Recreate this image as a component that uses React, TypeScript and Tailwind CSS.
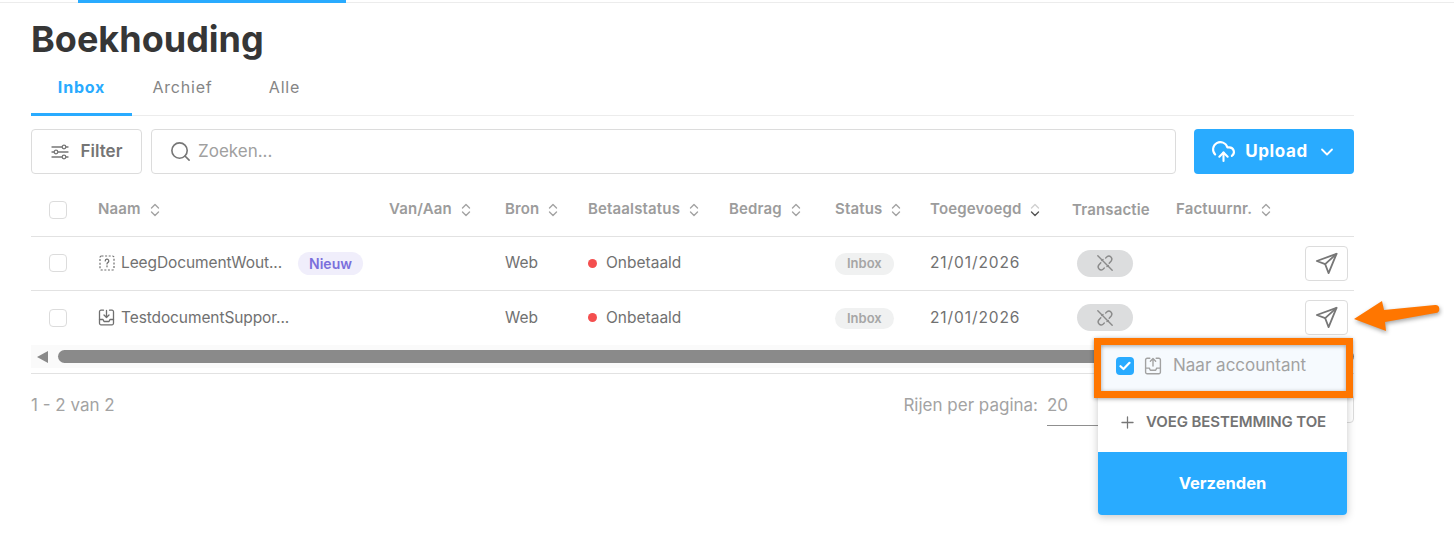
import { ChevronDown, CloudUpload, Plus, Search } from "lucide-react"

const columns = [
  { name: "Van/Aan", width: "w-[116px]" },
  { name: "Bron", width: "w-[83px]" },
  { name: "Betaalstatus", width: "w-[141px]" },
  { name: "Bedrag", width: "w-[106px]" },
  { name: "Status", width: "w-[95px]" },
  { name: "Toegevoegd", width: "w-[142px]" },
]

function SortIcon({ active }: { active?: boolean }) {
  return (
    <svg width="10" height="16" viewBox="0 0 10 16" fill="none" strokeWidth="1.4" strokeLinecap="round" strokeLinejoin="round">
      <path d="M1.5 6 5 2.5 8.5 6" stroke={active ? "#d0d0d0" : "#a3a3a3"} />
      <path d="M1.5 10 5 13.5 8.5 10" stroke={active ? "#555555" : "#a3a3a3"} />
    </svg>
  )
}

function Checkbox() {
  return <span className="block h-[18px] w-[18px] rounded-[4px] border border-[#dcdcdc] bg-white" />
}

function HeaderCell({ name, active }: { name: string; active?: boolean }) {
  return (
    <span className="flex items-center gap-[9px] text-[15px] font-semibold tracking-[0.15px] text-[#9c9c9c]">
      {name}
      <SortIcon active={active} />
    </span>
  )
}

function SendIcon() {
  return (
    <svg width="23" height="23" viewBox="0 0 23 23" fill="none" stroke="#777777" strokeWidth="1.8" strokeLinejoin="round" strokeLinecap="round">
      <path d="M21.5 1.8 1.8 9l8.4 3.2 3.4 8.9z" />
      <path d="M21.5 1.8 10.2 12.2" />
    </svg>
  )
}

function UnlinkIcon() {
  return (
    <svg width="18" height="18" viewBox="0 0 18 18" fill="none" stroke="#8a8a8a" strokeWidth="1.4" strokeLinecap="round">
      <path d="M9.7 4 11 2.8a3 3 0 0 1 4.2 4.2l-2 2.2" />
      <path d="M8.3 14 7 15.2A3 3 0 0 1 2.8 11l2-2.2" />
      <path d="M7 5.5 5.8 6.6" />
      <path d="M12.3 11.4 11 12.6" />
      <path d="M1.8 1.8 16.2 16.2" />
    </svg>
  )
}

function UnknownDocIcon() {
  return (
    <svg width="16" height="16" viewBox="0 0 16 16" fill="none" stroke="#6f6f6f" strokeWidth="1.2">
      <rect x="1" y="1" width="14" height="14" rx="1.5" strokeDasharray="2 1.6" />
      <path d="M6.2 6a1.8 1.8 0 1 1 2.6 1.6c-.6.3-.8.7-.8 1.3" strokeLinecap="round" />
      <path d="M8 10.8v1" strokeLinecap="round" />
    </svg>
  )
}

function TrayIcon({ up, color, size }: { up?: boolean; color: string; size: number }) {
  return (
    <svg width={size} height={size} viewBox="0 0 16 17" fill="none" stroke={color} strokeWidth="1.3" strokeLinecap="round" strokeLinejoin="round">
      <path d="M5 1.2H2.5A1.5 1.5 0 0 0 1 2.7v11.6a1.5 1.5 0 0 0 1.5 1.5h11a1.5 1.5 0 0 0 1.5-1.5V2.7a1.5 1.5 0 0 0-1.5-1.5H11" />
      <path d="M1 10.5h3.5l1 2h5l1-2H15" />
      {up ? <path d="M8 8.5V1.5M5.5 4 8 1.5 10.5 4" /> : <path d="M8 1.5V8.5M5.5 6 8 8.5 10.5 6" />}
    </svg>
  )
}

function Row({ name, icon, isNew, last }: { name: string; icon: React.ReactNode; isNew?: boolean; last?: boolean }) {
  return (
    <div className={`flex h-[54px] items-center pb-[1px] text-[15.5px] text-[#717171] ${last ? "" : "border-b border-[#e2e2e2]"}`}>
      <div className="flex w-[67px] pl-[18px]">
        <Checkbox />
      </div>
      <div className="flex w-[291px] items-center">
        <span className="mr-[6px] flex w-[17px] justify-center">{icon}</span>
        <span className="tracking-[-0.1px]">{name}</span>
        {isNew && (
          <span className="ml-[16px] rounded-full bg-[#f0eefb] px-[11px] py-[1px] text-[14px] font-semibold text-[#7b6fdc]">Nieuw</span>
        )}
      </div>
      <div className="w-[116px]" />
      <div className="w-[83px]">Web</div>
      <div className="flex w-[141px] items-center gap-[9px]">
        <span className="h-[9px] w-[9px] rounded-full bg-[#f44f4f]" />
        Onbetaald
      </div>
      <div className="w-[106px]" />
      <div className="w-[95px]">
        <span className="inline-block rounded-full bg-[#f0f1f1] px-[12px] py-[1px] text-[13px] font-semibold text-[#a6a6a6]">Inbox</span>
      </div>
      <div className="w-[142px] tracking-[0.9px]">21/01/2026</div>
      <div className="w-[104px] pl-[5px]">
        <span className="flex h-[27px] w-[56px] items-center justify-center rounded-full bg-[#dcddde]">
          <UnlinkIcon />
        </span>
      </div>
      <div className="flex flex-1 justify-end pr-[6px]">
        <span className="flex h-[35px] w-[43px] items-center justify-center rounded-[4px] border border-[#dcdcdc] bg-white">
          <SendIcon />
        </span>
      </div>
    </div>
  )
}

export default function App() {
  return (
    <div className="relative h-[543px] w-[1454px] overflow-hidden bg-white font-['Inter','Noto_Sans',sans-serif]">
      <div className="relative h-[3px] border-b border-[#ececec]">
        <div className="absolute left-[78px] top-0 h-[3px] w-[268px] bg-[#29abff]" />
      </div>

      <div className="ml-[31px] w-[1323px]">
        <h1 className="mt-[13px] h-[46px] text-[36px] font-bold leading-[46px] text-[#363636]">Boekhouding</h1>

        <div className="flex h-[54px] border-b border-[#ececec] text-[16px] tracking-[0.8px]">
          <div className="-mb-px flex w-[101px] items-center justify-center border-b-[3px] border-[#29abff] pb-[2px] font-bold text-[#29abff]">Inbox</div>
          <div className="flex w-[101px] items-center justify-center pb-[4px] text-[#858585]">Archief</div>
          <div className="flex w-[103px] items-center justify-center pb-[4px] text-[#858585]">Alle</div>
        </div>

        <div className="mt-[13px] flex h-[45px] gap-[9px]">
          <button type="button" className="flex w-[111px] items-center justify-center gap-[12px] rounded-[4px] border border-[#dcdcdc] text-[17px] font-semibold text-[#757575]">
            <svg width="18" height="16" viewBox="0 0 18 16" fill="none" stroke="#777777" strokeWidth="1.3">
              <path d="M1 3h10M15 3h2M1 8h2M7 8h10M1 13h10M15 13h2" strokeLinecap="round" />
              <circle cx="13" cy="3" r="1.8" />
              <circle cx="5" cy="8" r="1.8" />
              <circle cx="13" cy="13" r="1.8" />
            </svg>
            Filter
          </button>
          <div className="flex w-[1025px] items-center rounded-[4px] border border-[#dcdcdc] pl-[17px] text-[17px] text-[#a0a0a0]">
            <Search className="mr-[6px] h-[23px] w-[23px] text-[#777777]" strokeWidth={1.7} />
            Zoeken...
          </div>
          <button type="button" className="ml-[9px] flex w-[160px] items-center justify-center gap-[9px] rounded-[4px] bg-[#29abff] text-[17px] font-bold tracking-[0.6px] text-white">
            <CloudUpload className="h-[25px] w-[25px]" strokeWidth={2} />
            Upload
            <ChevronDown className="h-[20px] w-[20px]" strokeWidth={2.2} />
          </button>
        </div>

        <div className="mt-[5px] flex h-[58px] items-center border-b border-[#e2e2e2] pt-[4px]">
          <div className="flex w-[67px] pl-[18px]">
            <Checkbox />
          </div>
          <div className="w-[291px]">
            <HeaderCell name="Naam" />
          </div>
          {columns.map((col) => (
            <div key={col.name} className={col.width}>
              <HeaderCell name={col.name} active={col.name === "Toegevoegd"} />
            </div>
          ))}
          <div className="w-[104px]">
            <span className="text-[15px] font-semibold tracking-[0.15px] text-[#9c9c9c]">Transactie</span>
          </div>
          <div className="flex-1">
            <HeaderCell name="Factuurnr." />
          </div>
        </div>

        <Row name="LeegDocumentWout..." icon={<UnknownDocIcon />} isNew />
        <Row name="TestdocumentSuppor..." icon={<TrayIcon color="#6f6f6f" size={17} />} last />

        <div className="flex h-[23px] items-center bg-[#fafafa] pl-[6px]">
          <span className="h-0 w-0 border-y-[6px] border-r-[11px] border-y-transparent border-r-[#8a8a8a]" />
          <span className="ml-[10px] h-[13px] flex-1 rounded-full bg-[#8a8a8a]" />
        </div>

        <div className="mt-[5px] flex h-[52px] items-start justify-between border-t border-[#e2e2e2] pt-[20px] text-[17px] leading-[22px] text-[#a3a3a3]">
          <span>1 - 2 van 2</span>
          <div className="flex items-start">
            <span className="mr-[9px]">Rijen per pagina:</span>
            <span className="h-[32px] w-[52px] border-b border-[#8f8f8f]">20</span>
            <span className="ml-[155px] h-[29px] w-[100px] rounded-[4px] border border-[#dcdcdc]" />
          </div>
        </div>
      </div>

      <div className="absolute left-[1098px] top-[340px] w-[249px] rounded-b-[4px] bg-white shadow-[0_2px_8px_rgba(0,0,0,0.22)]">
        <div className="flex h-[57px] items-center gap-[10px] bg-[#f6fafe] pb-[6px] pl-[18px] text-[17px] text-[#a2a2a2]">
          <span className="flex h-[18px] w-[18px] items-center justify-center rounded-[4px] bg-[#29abff]">
            <svg width="12" height="10" viewBox="0 0 12 10" fill="none" stroke="white" strokeWidth="2.2" strokeLinecap="round" strokeLinejoin="round">
              <path d="M1.5 5.2 4.5 8 10.5 1.8" />
            </svg>
          </span>
          <TrayIcon up color="#a2a2a2" size={18} />
          <span className="ml-[1px]">Naar accountant</span>
        </div>
        <div className="flex h-[55px] items-center border-t border-[#e2e2e2] pb-[6px] pl-[20px] text-[15px] font-semibold tracking-[-0.1px] text-[#737373]">
          <Plus className="mr-[9px] h-[19px] w-[19px] text-[#777777]" strokeWidth={1.6} />
          VOEG BESTEMMING TOE
        </div>
        <div className="flex h-[63px] items-center justify-center rounded-b-[4px] bg-[#29abff] text-[16.5px] font-bold text-white">Verzenden</div>
      </div>

      <div className="absolute left-[1094px] top-[338px] h-[60px] w-[259px] border-[7px] border-[#ff7600] shadow-[0_1px_4px_rgba(0,0,0,0.35),inset_0_1px_4px_rgba(0,0,0,0.35)]" />

      <svg className="absolute left-[1352px] top-[300px]" width="92" height="36" viewBox="0 0 92 36" fill="none">
        <path d="M2 19 30 1l2 9 51-5a4 4 0 0 1 .6 8L33 22l1 9z" fill="#ff7600" style={{ filter: "drop-shadow(1px 2px 2px rgba(0,0,0,0.35))" }} />
      </svg>
    </div>
  )
}
